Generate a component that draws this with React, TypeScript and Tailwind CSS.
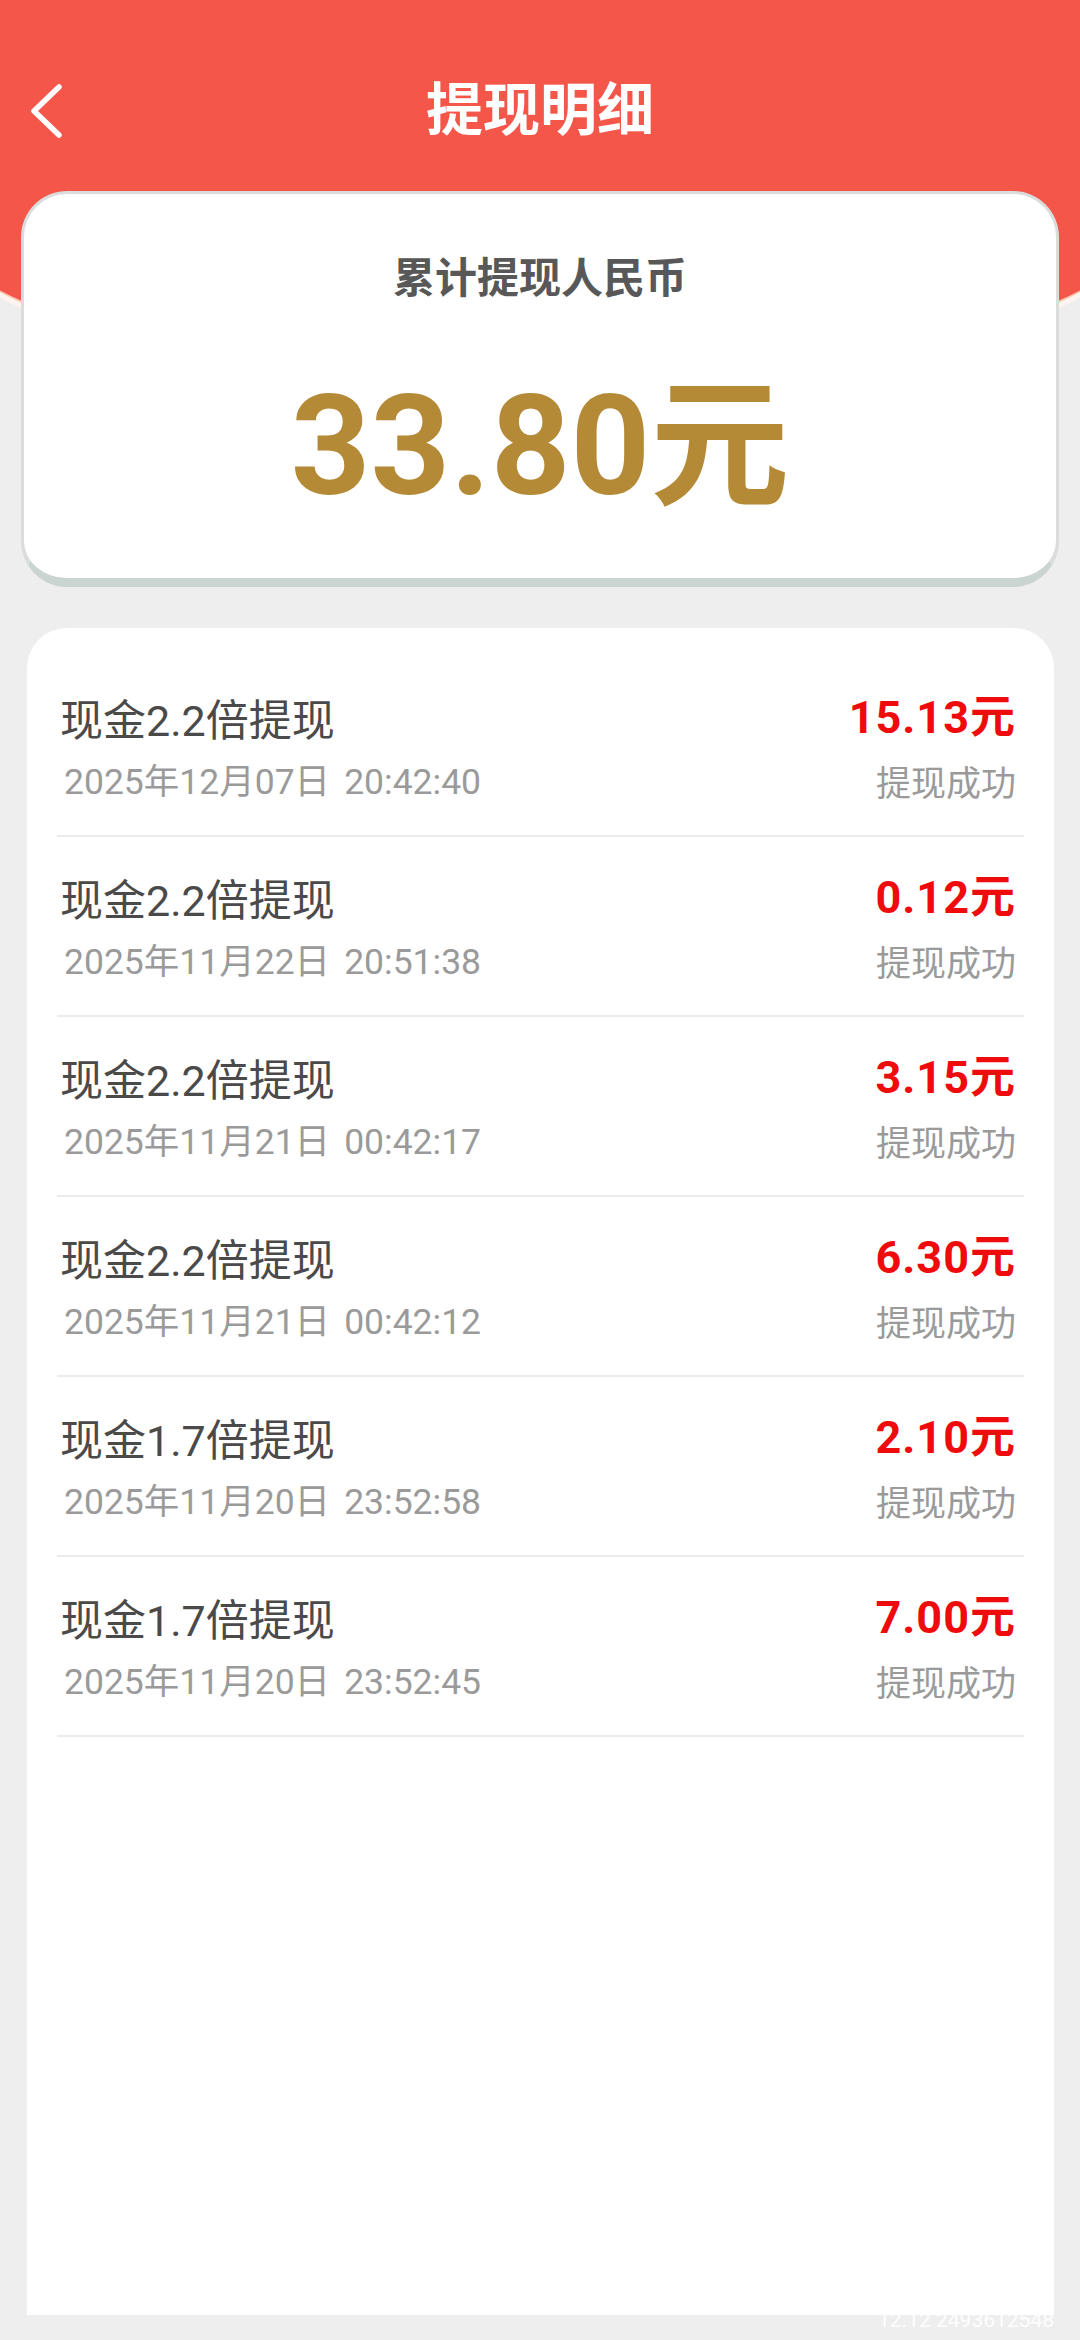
import React from "react";

const rows = [
  { title: "现金2.2倍提现", day: "2025年12月07日", time: "20:42:40", amount: "15.13元" },
  { title: "现金2.2倍提现", day: "2025年11月22日", time: "20:51:38", amount: "0.12元" },
  { title: "现金2.2倍提现", day: "2025年11月21日", time: "00:42:17", amount: "3.15元" },
  { title: "现金2.2倍提现", day: "2025年11月21日", time: "00:42:12", amount: "6.30元" },
  { title: "现金1.7倍提现", day: "2025年11月20日", time: "23:52:58", amount: "2.10元" },
  { title: "现金1.7倍提现", day: "2025年11月20日", time: "23:52:45", amount: "7.00元" },
];

export default function App() {
  return (
    <div
      className="relative w-[1080px] h-[2340px] overflow-hidden bg-[#eeeeee] flex flex-col"
      style={{ fontFamily: 'Roboto, "Noto Sans CJK SC", sans-serif' }}
    >
      {/* Header */}
      <div className="-mx-[60px] h-[382px] shrink-0 px-[60px] bg-[#f4574a] rounded-b-[600px_159px] border-b-4 border-[#f8cdb9] shadow-[0_5px_0_#fff5f0]">
        <div className="mt-[72px] h-[78px] grid grid-cols-[1fr_auto_1fr] items-center">
          <div className="pl-[29px] flex items-center">
            <svg width="34" height="54" viewBox="0 0 34 54" fill="none">
              <path
                d="M30 3 L5 27 L30 51"
                stroke="white"
                strokeWidth="5.5"
                strokeLinecap="round"
                strokeLinejoin="round"
              />
            </svg>
          </div>
          <div className="text-white font-bold text-[57px] leading-[78px]">提现明细</div>
          <div />
        </div>
      </div>

      {/* Summary card */}
      <div className="-mt-[191px] mx-[21px] shrink-0 bg-white rounded-[46px] border-[3px] border-[#dadddc] border-b-[9px] border-b-[#cad4d0] pt-[55px] pb-[51px] flex flex-col items-center">
        <div className="text-[42px] leading-[60px] font-bold text-[#585858]">累计提现人民币</div>
        <div className="mt-[58px] text-[139px] leading-[160px] font-bold text-[#b58a37]">33.80元</div>
      </div>

      {/* List card */}
      <div className="mt-[41px] ml-[27px] mr-[26px] mb-[25px] flex-1 bg-white rounded-t-[40px] pt-[29px]">
        <div className="mx-[30px] flex flex-col">
          {rows.map((r, i) => (
            <div
              key={i}
              className="h-[180px] flex justify-between border-b-2 border-[#ebebeb]"
            >
              <div className="pt-[39px] pl-[3px] flex flex-col">
                <div className="text-[43px] leading-[50px] text-[#4a4a4a]">{r.title}</div>
                <div className="mt-[14px] ml-[4px] text-[35.5px] leading-[44px] text-[#9a9a9a] whitespace-nowrap">
                  <span>{r.day}</span>
                  <span className="ml-[14px]">{r.time}</span>
                </div>
              </div>
              <div className="pt-[36px] pr-[8px] flex flex-col items-end">
                <div className="text-[45px] leading-[50px] font-bold tracking-[1px] text-[#ef0b0b]">
                  {r.amount}
                </div>
                <div className="mt-[20px] text-[35px] leading-[44px] text-[#9a9a9a]">提现成功</div>
              </div>
            </div>
          ))}
        </div>
      </div>

      {/* watermark */}
      <div className="absolute right-[26px] bottom-[8px] text-[21px] leading-[24px] text-white/90">
        12.12 2493612548
      </div>
    </div>
  );
}
